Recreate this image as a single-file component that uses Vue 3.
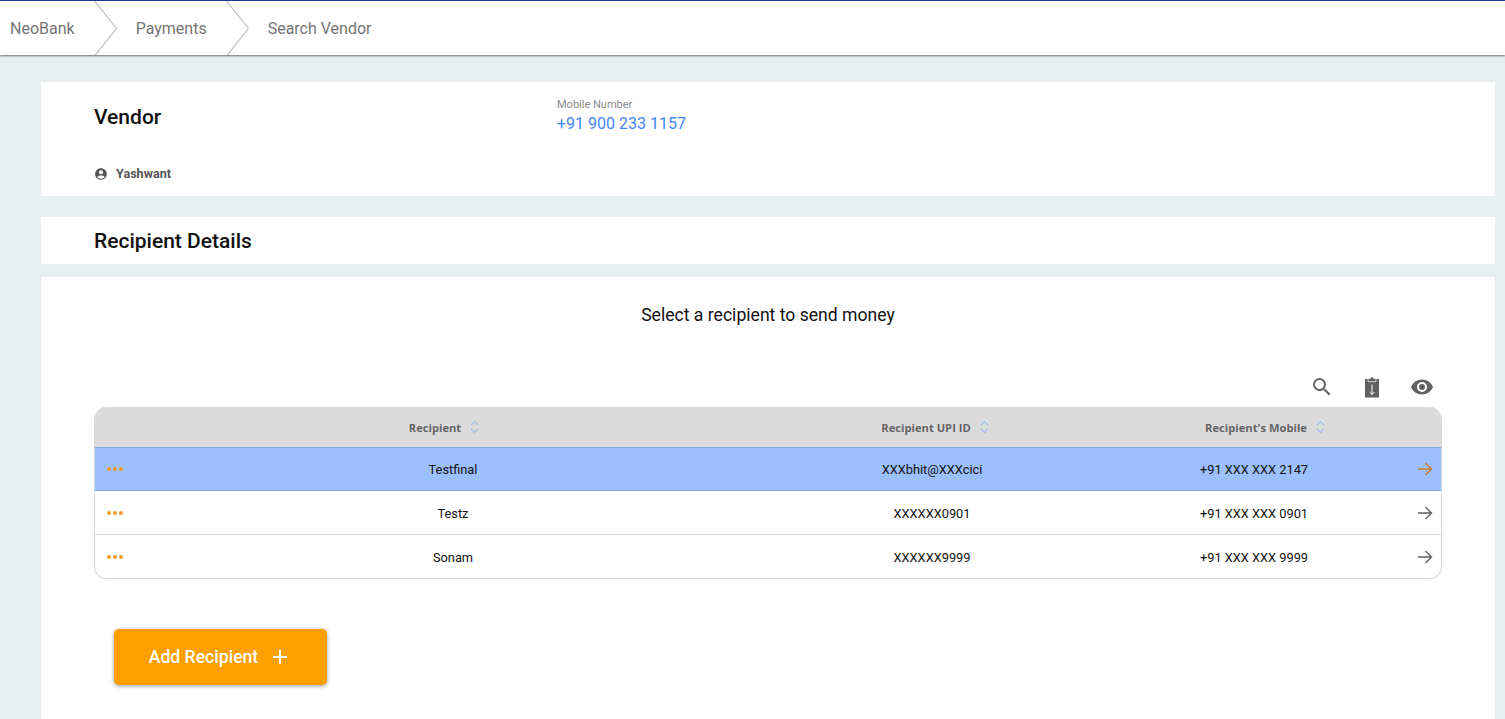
<script setup>
import { ref } from 'vue'

const recipients = ref([
  { name: 'Testfinal', upi: 'XXXbhit@XXXcici', mobile: '+91 XXX XXX 2147', active: true },
  { name: 'Testz', upi: 'XXXXXX0901', mobile: '+91 XXX XXX 0901', active: false },
  { name: 'Sonam', upi: 'XXXXXX9999', mobile: '+91 XXX XXX 9999', active: false },
])

const columns = ['Recipient', 'Recipient UPI ID', "Recipient's Mobile"]
const crumbs = ['NeoBank', 'Payments', 'Search Vendor']
</script>

<template>
  <div class="page">
    <nav class="topBar">
      <template v-for="(crumb, i) in crumbs" :key="crumb">
        <span class="crumb">{{ crumb }}</span>
        <svg v-if="i < crumbs.length - 1" class="crumbArrow" width="23" height="55" viewBox="0 0 23 55">
          <path d="M0.5 0 L22.5 27.5 L0.5 55" fill="none" stroke="#bdbdbd" stroke-width="1.2" />
        </svg>
      </template>
    </nav>

    <main class="content">
      <section class="card vendorCard">
        <div class="vendorTop">
          <h2 class="cardTitle vendorTitle">Vendor</h2>
          <div class="mobileBlock">
            <div class="mobileLabel">Mobile Number</div>
            <div class="mobileValue">+91 900 233 1157</div>
          </div>
        </div>
        <div class="vendorUser">
          <svg width="14" height="14" viewBox="0 0 24 24">
            <path fill="#555" d="M12 2C6.48 2 2 6.48 2 12s4.48 10 10 10 10-4.48 10-10S17.52 2 12 2zm0 3.5a3.5 3.5 0 1 1 0 7 3.5 3.5 0 0 1 0-7zm0 14.7a8.2 8.2 0 0 1-6.3-2.95C6.9 15.4 9.9 14.6 12 14.6s5.1.8 6.3 2.65A8.2 8.2 0 0 1 12 20.2z" />
          </svg>
          <span>Yashwant</span>
        </div>
      </section>

      <section class="card detailsCard">
        <h2 class="cardTitle">Recipient Details</h2>
      </section>

      <section class="card tableCard">
        <p class="selectText">Select a recipient to send money</p>

        <div class="toolRow">
          <svg width="24" height="24" viewBox="0 0 24 24">
            <path fill="#616161" d="M15.5 14h-.79l-.28-.27A6.47 6.47 0 0 0 16 9.5 6.5 6.5 0 1 0 9.5 16c1.61 0 3.09-.59 4.23-1.57l.27.28v.79l5 4.99L20.49 19l-4.99-5zm-6 0C7.01 14 5 11.99 5 9.5S7.01 5 9.5 5 14 7.01 14 9.5 11.99 14 9.5 14z" />
          </svg>
          <svg width="24" height="24" viewBox="0 0 24 24">
            <rect x="5" y="4" width="14" height="18.5" fill="#616161" />
            <path fill="#616161" stroke="#fff" stroke-width="0.7" d="M8 3.4h2.4a1.6 1.6 0 0 1 3.2 0H16v3.3H8z" />
            <path fill="none" stroke="#fff" stroke-width="1" d="M12 9.5v10M9.6 17L12 19.4l2.4-2.4" />
          </svg>
          <svg width="24" height="24" viewBox="0 0 24 24">
            <path fill="#616161" d="M12 4.5C7 4.5 2.73 7.61 1 12c1.73 4.39 6 7.5 11 7.5s9.27-3.11 11-7.5c-1.73-4.39-6-7.5-11-7.5zM12 17a5 5 0 1 1 0-10 5 5 0 0 1 0 10zm0-8a3 3 0 1 0 0 6 3 3 0 0 0 0-6z" />
          </svg>
        </div>

        <div class="table">
          <div class="tableHead">
            <span></span>
            <div v-for="col in columns" :key="col" class="headCell">
              <span>{{ col }}</span>
              <svg width="9" height="14" viewBox="0 0 9 14">
                <path d="M1 5 L4.5 1.5 L8 5 M1 9 L4.5 12.5 L8 9" fill="none" stroke="#a3bbe6" stroke-width="1.2" />
              </svg>
            </div>
            <span></span>
          </div>
          <div
            v-for="row in recipients"
            :key="row.name"
            class="tableRow"
            :class="{ active: row.active }"
          >
            <div class="dots"><i></i><i></i><i></i></div>
            <div class="cell">{{ row.name }}</div>
            <div class="cell">{{ row.upi }}</div>
            <div class="cell">{{ row.mobile }}</div>
            <svg class="rowArrow" width="16" height="14" viewBox="0 0 16 14">
              <path d="M1 7 H14.5 M8.5 1 L14.5 7 L8.5 13" fill="none" :stroke="row.active ? '#c8792a' : '#616161'" stroke-width="1.4" />
            </svg>
          </div>
        </div>

        <button class="addButton">
          <span>Add Recipient</span>
          <svg width="16" height="16" viewBox="0 0 16 16">
            <path d="M8 1 V15 M1 8 H15" stroke="#fff" stroke-width="2" />
          </svg>
        </button>
      </section>
    </main>
  </div>
</template>

<style>
  html, body {
    margin: 0;
    background: #e8edf0;
  }
</style>

<style scoped>
  .page {
    height: 100vh;
    overflow: hidden;
    font-family: Roboto, "Liberation Sans", sans-serif;
    background: #e8edf0;
  }
  .topBar {
    height: 54px;
    border-top: 1px solid #1a3a8a;
    background: #fff;
    box-shadow: 0 1px 2px rgba(0, 0, 0, 0.55);
    display: flex;
    align-items: center;
    gap: 19px;
    padding-left: 10px;
    overflow: hidden;
  }
  .crumb {
    font-size: 16px;
    color: #757575;
  }
  .crumbArrow {
    flex: none;
  }
  .content {
    padding: 27px 10px 0 41px;
    display: flex;
    flex-direction: column;
  }
  .card {
    background: #fff;
    padding-left: 53px;
    padding-right: 53px;
  }
  .cardTitle {
    margin: 0;
    font-size: 21px;
    line-height: 24px;
    font-weight: 500;
    color: #111;
  }
  .vendorCard {
    height: 114px;
    box-sizing: border-box;
    padding-top: 16px;
  }
  .vendorTop {
    display: flex;
    height: 60px;
  }
  .vendorTitle {
    width: 463px;
    padding-top: 7px;
  }
  .mobileLabel {
    font-size: 11px;
    line-height: 14px;
    color: #8a8a8a;
  }
  .mobileValue {
    font-size: 16px;
    line-height: 22px;
    margin-top: 1px;
    color: #4285f4;
  }
  .vendorUser {
    display: flex;
    align-items: center;
    gap: 8px;
    margin-top: 8px;
    font-size: 12.6px;
    font-weight: 700;
    color: #555;
  }
  .detailsCard {
    margin-top: 21px;
    height: 47px;
    box-sizing: border-box;
    padding-top: 12px;
  }
  .tableCard {
    margin-top: 13px;
    height: 500px;
    padding-top: 1px;
  }
  .selectText {
    margin: 26px 0 0;
    text-align: center;
    font-size: 17.6px;
    line-height: 22px;
    color: #111;
  }
  .toolRow {
    display: flex;
    justify-content: flex-end;
    gap: 26px;
    margin-top: 49px;
    height: 24px;
    padding-right: 8px;
    margin-bottom: 8px;
  }
  .table {
    border-radius: 12px;
    border: 1px solid #d9d9d9;
    border-top: none;
    overflow: hidden;
  }
  .tableHead {
    display: grid;
    grid-template-columns: 40px 620px 362px 298px 28px;
    align-items: center;
    height: 40px;
    margin: 0 -1px;
    background: #dbdbdb;
    font-family: "Open Sans", sans-serif;
    font-size: 11.2px;
    font-weight: 700;
    color: #666;
  }
  .headCell {
    display: flex;
    justify-content: center;
    align-items: center;
    gap: 9px;
  }
  .headCell svg {
    flex: none;
  }
  .tableRow {
    display: grid;
    grid-template-columns: 40px 638px 320px 324px 26px;
    align-items: center;
    height: 44px;
    box-sizing: border-box;
    border-bottom: 1px solid #d9d9d9;
    font-size: 12.8px;
    color: #111;
    margin: 0 -1px;
    padding-top: 1px;
  }
  .tableRow:last-child {
    height: 43px;
    border-bottom: none;
  }
  .tableRow.active {
    background: #9cc0ff;
    border-top: 1px solid #79a9e4;
    border-bottom: 1px solid #79a9e4;
    box-shadow: inset 1px 0 #79a9e4, inset -1px 0 #79a9e4;
    padding-top: 0;
  }
  .cell {
    text-align: center;
  }
  .dots {
    display: flex;
    gap: 2px;
    padding-left: 13px;
  }
  .dots i {
    width: 4px;
    height: 4px;
    border-radius: 50%;
    background: #f39c1f;
  }
  .rowArrow {
    justify-self: end;
    margin-right: 9px;
  }
  .addButton {
    margin: 50px 0 0 20px;
    width: 213px;
    height: 56px;
    border: none;
    border-radius: 5px;
    background: #ff9f00;
    color: #fff;
    font-family: Roboto, sans-serif;
    font-size: 17.6px;
    font-weight: 500;
    box-shadow: 0 1px 4px rgba(0, 0, 0, 0.4);
    display: flex;
    align-items: center;
    justify-content: center;
    gap: 14px;
    padding: 0 4px 0 0;
  }
</style>
